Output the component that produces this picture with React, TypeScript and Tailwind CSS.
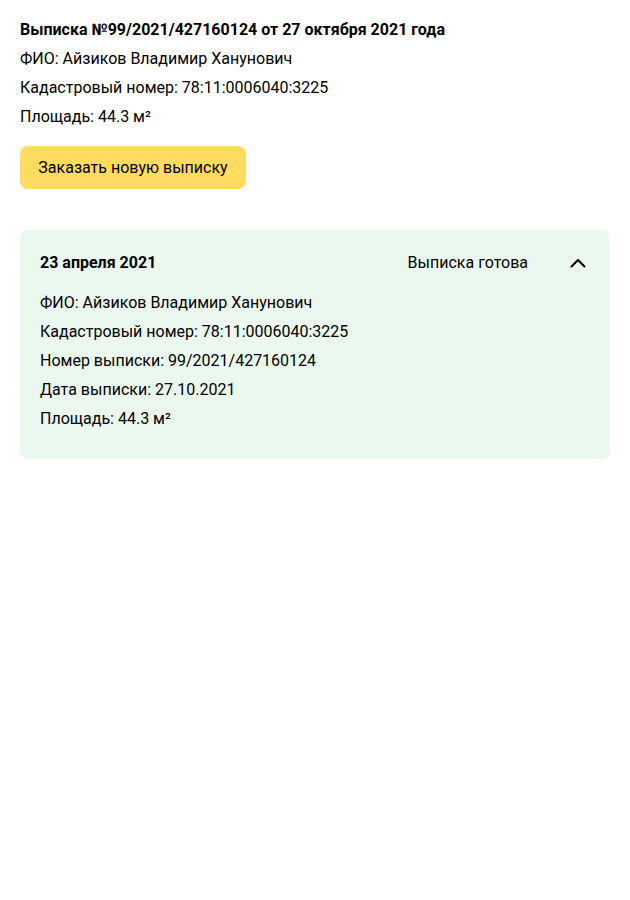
const font = { fontFamily: 'Roboto, "Noto Sans", sans-serif' };

const summary = [
  'ФИО: Айзиков Владимир Ханунович',
  'Кадастровый номер: 78:11:0006040:3225',
  'Площадь: 44.3 м²',
];

const details = [
  'ФИО: Айзиков Владимир Ханунович',
  'Кадастровый номер: 78:11:0006040:3225',
  'Номер выписки: 99/2021/427160124',
  'Дата выписки: 27.10.2021',
  'Площадь: 44.3 м²',
];

function Chevron() {
  return (
    <svg width="16" height="16" viewBox="0 0 16 16" fill="none" className="shrink-0">
      <polyline
        points="1.5,11.5 8,5 14.5,11.5"
        stroke="#000"
        strokeWidth="2"
        strokeLinecap="round"
        strokeLinejoin="round"
      />
    </svg>
  );
}

export default function App() {
  return (
    <div className="min-h-[900px] bg-white px-5 pt-[15px] text-black" style={font}>
      {/* Current extract */}
      <div className="text-base leading-[29px]">
        <div className="font-bold">Выписка №99/2021/427160124 от 27 октября 2021 года</div>
        {summary.map((line) => (
          <div key={line}>{line}</div>
        ))}
      </div>

      <button className="mt-[15px] h-[43px] w-[226px] rounded-lg bg-[#ffdc60] text-base text-black">
        Заказать новую выписку
      </button>

      {/* History card */}
      <div className="mt-[41px] rounded-lg bg-[#ebf8ef] pl-5 pr-6 pt-[21px] pb-[26px]">
        <div className="flex h-6 items-center justify-between text-base leading-6">
          <span className="font-bold">23 апреля 2021</span>
          <div className="flex items-center gap-[42px]">
            <span>Выписка готова</span>
            <Chevron />
          </div>
        </div>
        <div className="mt-[13px] text-base leading-[29px]">
          {details.map((line) => (
            <div key={line}>{line}</div>
          ))}
        </div>
      </div>
    </div>
  );
}
